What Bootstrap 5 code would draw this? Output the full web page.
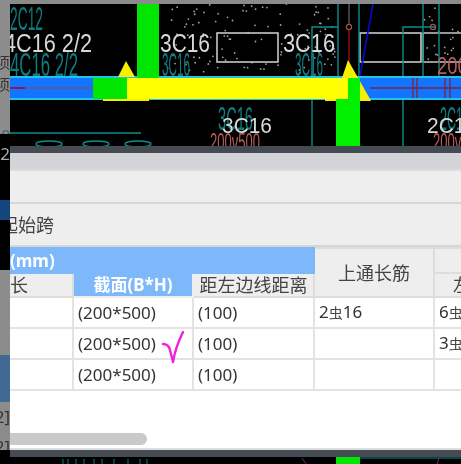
<!DOCTYPE html>
<html lang="en">
<head>
  <meta charset="UTF-8" />
  <meta name="viewport" content="width=device-width, initial-scale=1.0" />
  <title>梁平法表格</title>
  <link href="https://cdn.jsdelivr.net/npm/bootstrap@5.3.3/dist/css/bootstrap.min.css" rel="stylesheet" />
  <style>
    html, body { height: 464px; overflow: hidden; }
    body { background: #000; font-family: "Noto Sans", "Noto Sans CJK SC", sans-serif; }
    .shot { width: 461px; height: 464px; filter: blur(.4px); }

    .side-strip { width: 10px; flex: none; font-size: 15px; color: #333; }
    .side-strip > div { overflow: hidden; white-space: nowrap; direction: rtl; }
    .s-gray { background: #8c8c8c; }
    .s-black { background: #000; }
    .s-blue { background: #3f6a93; }
    .s-navy { background: #14457c; }
    .s-a { height: 53px; }
    .s-b { height: 22px; line-height: 18px; }
    .s-d { height: 37px; color: #3f5f80; line-height: 74px; }
    .s-e { height: 66px; color: #aaa; font-size: 17px; line-height: 40px; }
    .s-n { height: 20px; }
    .s-k { height: 50px; }
    .s-f { height: 85px; }
    .s-g { height: 47px; }
    .s-h { height: 48px; line-height: 30px; font-size: 17px; }

    .main-col { width: 451px; flex: none; }
    .top-edge { height: 4px; background: #8a8a8a; }
    .cad-view { display: block; width: 451px; height: 142px; background: #000; flex: none; }
    .cad-view text { font-family: "Liberation Sans", sans-serif; }
    .dark-band { height: 7px; background: #454b52; flex: none; }

    .dlg { background: #fff; height: 297px; flex: none; }
    .dlg-title { height: 18px; background: #d3d4d8; border-bottom: 2px solid #dcdcdc; }
    .dlg-bar { height: 33px; background: #eee; border-bottom: 2px solid #d6d6d6; }
    .dlg-bar2 { height: 43px; background: #eee; border-bottom: 2px solid #d6d6d6; font-size: 18px; color: #444; line-height: 42px; overflow: hidden; white-space: nowrap; }
    .dlg-bar2 span { margin-left: -10px; display: inline-block; }

    .grid-wrap { height: 203px; overflow: hidden; position: relative; border-bottom: 2px solid #ddd; }
    .span-grid { table-layout: fixed; width: 520px; margin-left: -20px; border-collapse: collapse; font-size: 17px; color: #333; }
    .span-grid th, .span-grid td { border: 2px solid #e3e3e3; padding: 0 0 0 4px; font-weight: 400; white-space: nowrap; overflow: hidden; }
    .span-grid th { background: #eee; text-align: center; color: #444; border-color: #ddd; line-height: 20px; font-size: 18px; }
    .span-grid .row-top { height: 25px; }
    .span-grid .row-sub { height: 24px; }
    .span-grid td { height: 31px; line-height: 26px; }
    .span-grid .blue-head { background: #7cb8fa; color: #fff; font-weight: 700; font-size: 17px; border-color: #7cb8fa; text-align: left; padding-left: 18px; }
    .span-grid .blue-cell { background: #7cb8fa; color: #fff; font-weight: 700; font-size: 17px; border-color: #eee; padding-left: 0; }
    .span-grid .cut-left { text-align: right; padding: 0 54px 0 0; }
    .span-grid .cut-right { text-align: left; padding-left: 18px; }
    .span-grid .sub-label { padding-left: 0; }
    .steel { font-size: 14px; color: #444; }

    .tick { position: absolute; left: 151px; top: 82px; width: 26px; height: 36px; }
    .scroll-thumb { position: absolute; left: 0; bottom: 3px; width: 137px; height: 12px; background: #c9c9c9; border-radius: 0 6px 6px 0; }

    .cad-bottom { display: block; width: 451px; height: 7px; background: #000; }
  </style>
</head>
<body>
  <div class="shot d-flex">
    <div class="side-strip d-flex flex-column">
      <div class="s-gray s-a"></div>
      <div class="s-gray s-b">项</div>
      <div class="s-gray s-b">项</div>
      <div class="s-gray s-d">0</div>
      <div class="s-black s-e">2</div>
      <div class="s-navy s-n"></div>
      <div class="s-black s-k"></div>
      <div class="s-gray s-f"></div>
      <div class="s-blue s-g"></div>
      <div class="s-gray s-h">[2<br>[2</div>
      <div class="s-black flex-grow-1"></div>
    </div>

    <div class="main-col d-flex flex-column">
      <div class="top-edge"></div>

      <svg class="cad-view" viewBox="0 0 451 142" xmlns="http://www.w3.org/2000/svg">
        <g id="hatch" fill="#a0a0a0"></g>

        <!-- section outlines -->
        <g fill="none" stroke="#c8c8c8" stroke-width="1.6">
          <rect x="207" y="29" width="61" height="29"/>
          <rect x="350" y="29" width="61" height="29"/>
          <path d="M451 29h-38v29h38"/>
        </g>

        <!-- teal column lines -->
        <g fill="none" stroke="#0d8d8d" stroke-width="1.4">
          <path d="M328 0v72M349 0v72M413 0v72M429 0v72"/>
          <path d="M328 23h-26v119M425 23h-32v119"/>
          <path d="M0 129h131"/>
          <ellipse cx="39" cy="140" rx="13" ry="3"/><ellipse cx="86" cy="140" rx="13" ry="3"/><ellipse cx="128" cy="140" rx="13" ry="3"/>
        </g>
        <circle cx="339" cy="23" r="2.6" fill="none" stroke="#a05050" stroke-width="1.2"/>
        <circle cx="423" cy="23" r="2.6" fill="none" stroke="#a05050" stroke-width="1.2"/>
        <path d="M339 0v20" stroke="#555" stroke-width="1.5"/>
        <path d="M339 26v34" stroke="#8a1010" stroke-width="1.5"/>
        <path d="M363 0L350 72" stroke="#0a0ac8" stroke-width="1.6"/>

        <!-- teal dim labels -->
        <g fill="#0c7d80" font-size="33">
          <text x="0" y="26" textLength="33" lengthAdjust="spacingAndGlyphs">2C12</text>
          <text x="0" y="72" textLength="68" lengthAdjust="spacingAndGlyphs">4C16 2/2</text>
          <text x="152" y="72" textLength="28" lengthAdjust="spacingAndGlyphs">3C16</text>
          <text x="285" y="72" textLength="28" lengthAdjust="spacingAndGlyphs">3C16</text>
          <text x="208" y="126" textLength="35" lengthAdjust="spacingAndGlyphs">3C16</text>
          <text x="430" y="126" textLength="30" lengthAdjust="spacingAndGlyphs">2C16</text>
        </g>

        <!-- white labels -->
        <g fill="#d8d8d8" font-size="26">
          <text x="-6" y="48" textLength="88" lengthAdjust="spacingAndGlyphs">4C16 2/2</text>
          <text x="150" y="48" textLength="50" lengthAdjust="spacingAndGlyphs">3C16</text>
          <text x="273" y="48" textLength="52" lengthAdjust="spacingAndGlyphs">3C16</text>
        </g>
        <g fill="#d8d8d8" font-size="22">
          <text x="212" y="129" textLength="50" lengthAdjust="spacingAndGlyphs">3C16</text>
          <text x="417" y="129" textLength="50" lengthAdjust="spacingAndGlyphs">2C16</text>
        </g>
        <g fill="#b85c5c" font-size="24">
          <text x="200" y="146" textLength="50" lengthAdjust="spacingAndGlyphs">200v500</text>
          <text x="423" y="146" textLength="50" lengthAdjust="spacingAndGlyphs">200v500</text>
          <text x="427" y="70" textLength="40" lengthAdjust="spacingAndGlyphs">200v</text>
        </g>

        <!-- beam span -->
        <rect x="0" y="72" width="451" height="24" fill="#1fc4e8"/>
        <rect x="0" y="74" width="451" height="20" fill="#1274ff"/>
        <path d="M0 84h83" stroke="#5a5a9a" stroke-width="2"/>
        <path d="M0 84h15" stroke="#8a1a5a" stroke-width="2"/>
        <path d="M360 84h91" stroke="#5a3a70" stroke-width="2"/>
        <path d="M403 74v20M407 74v20M435 74v20M440 74v20" stroke="#7a2a5a" stroke-width="1.6"/>

        <path d="M116 57l9 16h-17zM93 95h46v2h-46z" fill="#f4f000"/>
        <path d="M338 56l22 39 1 2h-46v-2h10l13-39z" fill="#f4f000"/>

        <rect x="83" y="74" width="34" height="21" fill="#00e600"/>
        <rect x="117" y="74" width="221" height="21" fill="#ffff00"/>
        <rect x="127" y="0" width="22" height="74" fill="#00e600"/>
        <rect x="338" y="74" width="12" height="21" fill="#00f000"/>
        <rect x="326" y="95" width="24" height="47" fill="#00f000"/>
      </svg>

      <div class="dark-band"></div>

      <div class="dlg d-flex flex-column">
        <div class="dlg-title"></div>
        <div class="dlg-bar"></div>
        <div class="dlg-bar2"><span>起始跨</span></div>
        <div class="grid-wrap flex-grow-1">
          <table class="span-grid">
            <colgroup>
              <col style="width:82px"><col style="width:120px"><col style="width:121px"><col style="width:120px"><col style="width:77px">
            </colgroup>
            <thead>
              <tr class="row-top">
                <th class="blue-head" colspan="3">(mm)</th>
                <th rowspan="2" class="sub-label">上通长筋</th>
                <th></th>
              </tr>
              <tr class="row-sub">
                <th class="cut-left">跨长</th>
                <th class="blue-cell">截面(B*H)</th>
                <th class="sub-label">距左边线距离</th>
                <th class="cut-right">左支座</th>
              </tr>
            </thead>
            <tbody>
              <tr><td></td><td>(200*500)</td><td>(100)</td><td>2<span class="steel">虫</span>16</td><td>6<span class="steel">虫</span></td></tr>
              <tr><td></td><td>(200*500)</td><td>(100)</td><td></td><td>3<span class="steel">虫</span></td></tr>
              <tr><td></td><td>(200*500)</td><td>(100)</td><td></td><td></td></tr>
            </tbody>
          </table>
          <svg class="tick" viewBox="0 0 26 36" xmlns="http://www.w3.org/2000/svg">
            <path d="M2 15c3 0 6 2 7 6l3 12c1-6 4-18 10-30" fill="none" stroke="#f020e0" stroke-width="2.4" stroke-linecap="round" stroke-linejoin="round"/>
          </svg>
          <div class="scroll-thumb"></div>
        </div>
      </div>

      <div class="dark-band"></div>
      <svg class="cad-bottom" viewBox="0 0 451 7" xmlns="http://www.w3.org/2000/svg">
        <rect x="326" y="0" width="24" height="7" fill="#00e600"/>
        <path d="M350 1h101" stroke="#0d8d8d"/>
        <path d="M53 2v5M58 2v5M66 2v5M74 2v5M84 2v5M92 2v5M104 2v5M118 2v5M130 2v5M137 2v5" stroke="#0c7d80"/>
        <path d="M292 1l4 6M429 1l-2 6" stroke="#8a1a8a"/>
      </svg>
    </div>
  </div>
  <script src="https://cdn.jsdelivr.net/npm/bootstrap@5.3.3/dist/js/bootstrap.bundle.min.js"></script>
  <script>
    // slab hatch dots, fixed seed so every run draws the same
    const hatch = document.getElementById("hatch");
    let seed = 7;
    function next(max) {
      seed = (seed * 1103 + 12345) % 65536;
      return seed / 65536 * max;
    }
    let dots = "";
    for (let i = 0; i < 110; i++) {
      dots += `<circle cx="${155 + next(172)}" cy="${next(70)}" r="0.9"/>`;
    }
    for (let i = 0; i < 20; i++) {
      dots += `<circle cx="${414 + next(37)}" cy="${next(70)}" r="0.9"/>`;
    }
    hatch.innerHTML = dots;
  </script>
</body>
</html>
